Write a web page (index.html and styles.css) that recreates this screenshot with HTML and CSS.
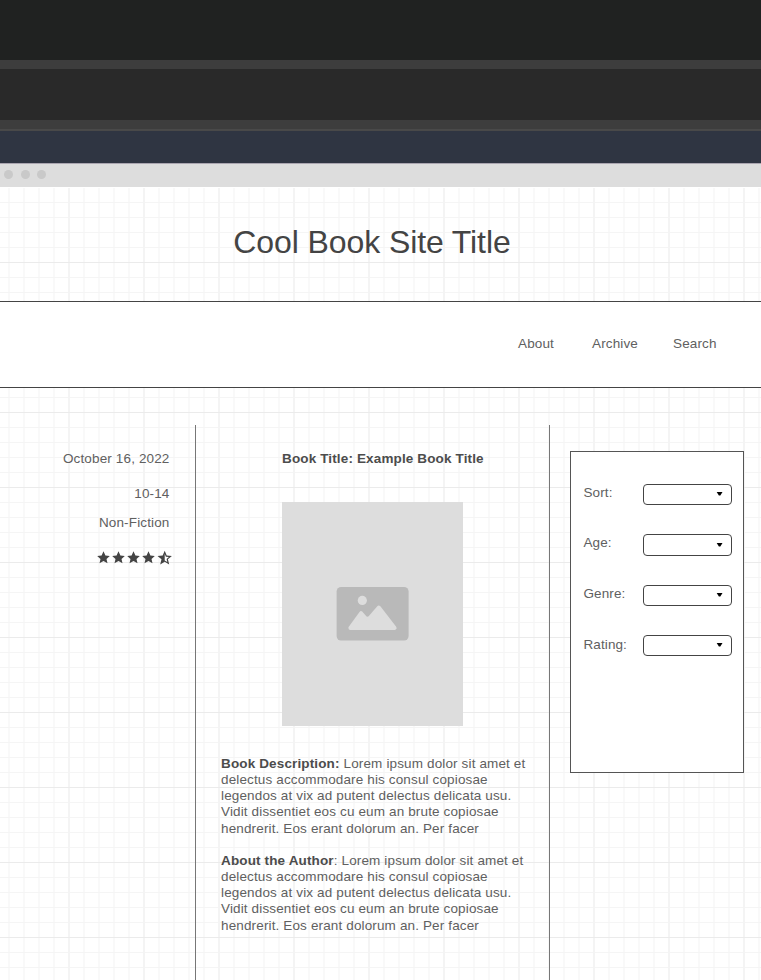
FILE: index.html
```html
<!DOCTYPE html>
<html lang="en">
<head>
<meta charset="utf-8">
<title>Cool Book Site Title</title>
<link rel="stylesheet" href="styles.css">
</head>
<body>
<div class="band band-top"></div>
<div class="band band-tabs"></div>
<div class="band band-blue"></div>
<div class="window-bar"><i></i><i></i><i></i></div>
<div class="canvas">
  <header class="hero"><h1>Cool Book Site Title</h1></header>
  <nav class="nav"><a>About</a><a>Archive</a><a>Search</a></nav>
  <main class="columns">
    <aside class="meta">
      <p class="date">October 16, 2022</p>
      <p class="age">10-14</p>
      <p class="kind">Non-Fiction</p>
      <svg class="stars" width="76" height="16" viewBox="0 0 76 16">
        <defs><path id="star" d="M6.5 .3 8.4 4.5 12.8 4.9 9.5 7.9 10.5 12.3 6.5 10 2.5 12.3 3.5 7.9 .2 4.9 4.6 4.5Z"/></defs>
        <use href="#star"/><use href="#star" x="15"/><use href="#star" x="30"/><use href="#star" x="45"/>
        <path fill-rule="evenodd" d="M67.7 -.3 69.7 4.5 74.9 4.9 70.9 8.3 72.2 13.6 67.7 10.8 63.2 13.6 64.5 8.3 60.5 4.9 65.7 4.5ZM67.7 2.9V9.4L70.3 10.9 69.6 7.9 71.9 5.9 68.9 5.7Z"/>
      </svg>
    </aside>
    <article class="book">
      <h2>Book Title: Example Book Title</h2>
      <div class="cover">
        <svg width="73" height="54" viewBox="0 0 73 54">
          <rect x=".6" width="72" height="53.5" rx="4.5" fill="#b9b9b9"/>
          <circle cx="26.3" cy="13.4" r="4.6" fill="#ddd"/>
          <path d="M14.4 41 25.1 26.2 29.1 30.8Q32.1 33 34.6 30L42.8 20.5 58.6 41Z" fill="#ddd" stroke="#ddd" stroke-width="4" stroke-linejoin="round"/>
        </svg>
      </div>
      <p><b>Book Description:</b> Lorem ipsum dolor sit amet et<br>delectus accommodare his consul copiosae<br>legendos at vix ad putent delectus delicata usu.<br>Vidit dissentiet eos cu eum an brute copiosae<br>hendrerit. Eos erant dolorum an. Per facer</p>
      <p><b>About the Author</b>: Lorem ipsum dolor sit amet et<br>delectus accommodare his consul copiosae<br>legendos at vix ad putent delectus delicata usu.<br>Vidit dissentiet eos cu eum an brute copiosae<br>hendrerit. Eos erant dolorum an. Per facer</p>
    </article>
    <section class="filters">
      <div class="row"><span>Sort:</span><div class="select"><svg width="7" height="4" viewBox="0 0 7 4"><path d="M.7 0H6.5L4.3 3.6H2.9Z"/></svg></div></div>
      <div class="row"><span>Age:</span><div class="select tall"><svg width="7" height="4" viewBox="0 0 7 4"><path d="M.7 0H6.5L4.3 3.6H2.9Z"/></svg></div></div>
      <div class="row"><span>Genre:</span><div class="select"><svg width="7" height="4" viewBox="0 0 7 4"><path d="M.7 0H6.5L4.3 3.6H2.9Z"/></svg></div></div>
      <div class="row"><span>Rating:</span><div class="select"><svg width="7" height="4" viewBox="0 0 7 4"><path d="M.7 0H6.5L4.3 3.6H2.9Z"/></svg></div></div>
    </section>
  </main>
</div>
</body>
</html>
```
FILE: styles.css
```css
* { box-sizing: border-box; margin: 0; padding: 0; }
body {
  width: 761px; height: 980px; overflow: hidden;
  display: flex; flex-direction: column;
  font: 13.5px/16.2px "Liberation Sans", Arial, sans-serif;
  letter-spacing: 0.14px;
  color: #606060; background: #fff;
}
.band { flex: none; }
.band-top { height: 60px; background: #202221; }
.band-tabs {
  height: 71px; border: solid transparent; border-width: 9px 0 11px;
  background: linear-gradient(#292929, #292929) padding-box, linear-gradient(#3d3d3d 69px, #494949 69px) border-box;
}
.band-blue { height: 33px; background: #2f3542; border-bottom: 1px solid #aaa5b0; }
.window-bar { flex: none; height: 23px; background: #ddd; display: flex; align-items: center; padding: 0 0 3px 3.5px; }
.window-bar i { width: 9px; height: 9px; border-radius: 50%; background: #c9c9c9; margin-right: 8px; }
.window-bar i:nth-child(2) { margin-right: 7px; }
.canvas {
  flex: 1; min-height: 0; display: flex; flex-direction: column;
  background:
    linear-gradient(#fff, #fff) 0 0 / 100% 1px no-repeat,
    repeating-linear-gradient(to bottom, #ebebeb 0 1px, transparent 1px 75px),
    repeating-linear-gradient(to right, transparent 0 68px, #f4f4f4 68px 70px, transparent 70px 75px),
    repeating-linear-gradient(to bottom, #f5f5f5 0 1px, transparent 1px 15px),
    repeating-linear-gradient(to right, transparent 0 8px, #f9f9f9 8px 10px, transparent 10px 15px),
    #fff;
}
.hero { height: 114px; flex: none; text-align: center; padding: 37px 17px 0 0; }
h1 { font-size: 32px; line-height: 37px; font-weight: 400; color: #444; letter-spacing: -0.1px; }
.nav {
  flex: none; height: 87px; background: #fff; border: solid #444; border-width: 1px 0;
  display: flex; padding: 34px 0 0 518px;
}
.nav a:nth-child(1) { width: 74px; }
.nav a:nth-child(2) { width: 81px; }
.columns { flex: 1; min-height: 0; display: flex; padding-top: 37px; }
.meta { width: 195px; padding: 26px 25.5px 0 0; text-align: right; }
.age { margin-top: 19px; }
.kind { margin-top: 13px; }
.stars { display: block; margin: 19px 0 0 97px; fill: #444; overflow: visible; }
.book { width: 355px; padding: 26px 0 0 25px; border: solid #777; border-width: 0 1px; }
h2 { font-size: 13.5px; line-height: 16.2px; color: #4c4c4c; padding-left: 61px; }
.cover { width: 181px; height: 224px; margin: 34.8px 0 29.8px 61px; background: #ddd; display: flex; align-items: center; justify-content: center; padding-bottom: 1px; }
.book p { margin-bottom: 16px; white-space: nowrap; }
b { color: #4c4c4c; }
.filters { width: 174px; height: 322px; margin: 26px 0 0 20px; background: #fff; border: 1px solid #555; padding-top: 32px; letter-spacing: 0.1px; }
.row { height: 50.4px; display: flex; padding-left: 12.5px; }
.row span { width: 59px; padding-top: 1px; }
.row:last-child span { padding-top: 1.6px; }
.select { width: 89px; height: 21px; border: 1px solid #444; border-radius: 4px; display: flex; align-items: center; justify-content: flex-end; padding: 0 8px 1px 0; }
.tall { height: 22px; }
```
